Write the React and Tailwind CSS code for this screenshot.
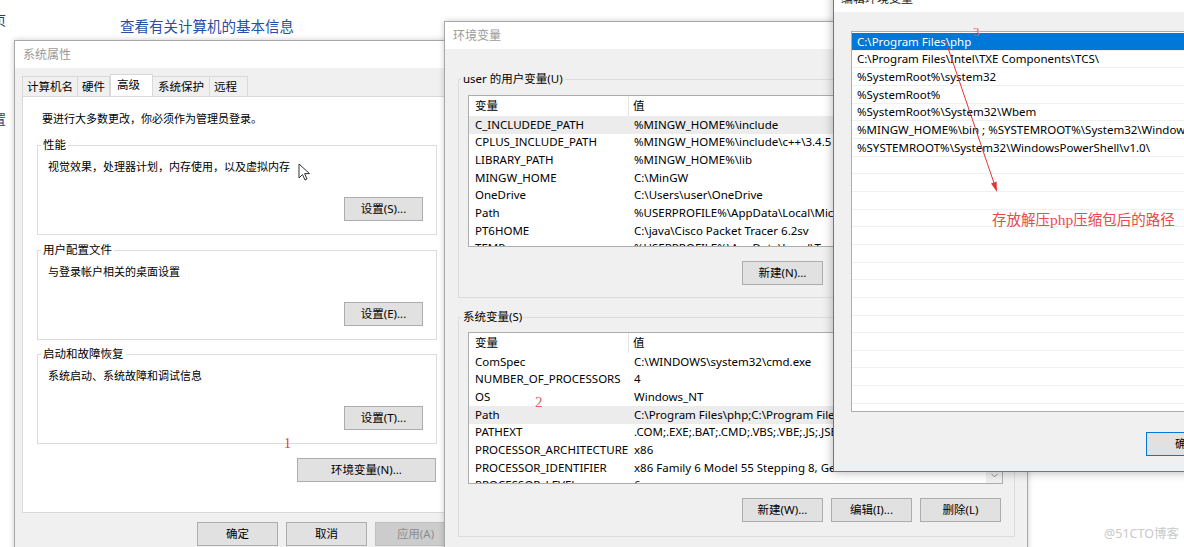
import { ChevronDown } from "lucide-react";

const userVars = [
  ["C_INCLUDEDE_PATH", "%MINGW_HOME%\\include"],
  ["CPLUS_INCLUDE_PATH", "%MINGW_HOME%\\include\\c++\\3.4.5"],
  ["LIBRARY_PATH", "%MINGW_HOME%\\lib"],
  ["MINGW_HOME", "C:\\MinGW"],
  ["OneDrive", "C:\\Users\\user\\OneDrive"],
  ["Path", "%USERPROFILE%\\AppData\\Local\\Microsoft\\WindowsApps;"],
  ["PT6HOME", "C:\\java\\Cisco Packet Tracer 6.2sv"],
  ["TEMP", "%USERPROFILE%\\AppData\\Local\\Temp"],
];

const sysVars = [
  ["ComSpec", "C:\\WINDOWS\\system32\\cmd.exe"],
  ["NUMBER_OF_PROCESSORS", "4"],
  ["OS", "Windows_NT"],
  ["Path", "C:\\Program Files\\php;C:\\Program Files\\Intel\\TXE Components\\TCS\\;"],
  ["PATHEXT", ".COM;.EXE;.BAT;.CMD;.VBS;.VBE;.JS;.JSE;.WSF;.WSH;.MSC"],
  ["PROCESSOR_ARCHITECTURE", "x86"],
  ["PROCESSOR_IDENTIFIER", "x86 Family 6 Model 55 Stepping 8, GenuineIntel"],
  ["PROCESSOR_LEVEL", "6"],
];

const pathItems = [
  "C:\\Program Files\\php",
  "C:\\Program Files\\Intel\\TXE Components\\TCS\\",
  "%SystemRoot%\\system32",
  "%SystemRoot%",
  "%SystemRoot%\\System32\\Wbem",
  "%MINGW_HOME%\\bin ; %SYSTEMROOT%\\System32\\WindowsPowerShell\\v1.0\\",
  "%SYSTEMROOT%\\System32\\WindowsPowerShell\\v1.0\\",
];

function Btn({ w = "w-[81px]", tone = "border-[#adadad] bg-[#e1e1e1] text-black", children }) {
  return (
    <div className={`flex h-[24px] shrink-0 items-center justify-center border text-[11.5px] ${tone} ${w}`}>
      {children}
    </div>
  );
}

function Group({ title, text, button, className = "" }) {
  return (
    <fieldset className={`h-[98px] w-[400px] border border-[#dcdcdc] px-[10px] ${className}`}>
      <legend className="ml-[-7px] px-[2px] text-[11.5px] leading-[16px]">{title}</legend>
      <div className="mt-[6px] text-[11px] leading-[16px]">{text}</div>
      <div className="mt-[22px] flex justify-end pr-[3px]">
        <Btn w="w-[79px]">{button}</Btn>
      </div>
    </fieldset>
  );
}

function ListView({ rows, active }) {
  return (
    <div className="flex h-[152px] w-[535px] overflow-hidden border border-[#adadad] bg-white">
      <div className="min-w-0 flex-1 overflow-hidden">
        <div className="flex h-[20px] items-center text-[11.5px]">
          <div className="flex h-full w-[160px] shrink-0 items-center border-r border-[#e5e5e5] pl-[6px]">变量</div>
          <div className="pl-[4px]">值</div>
        </div>
        {rows.map(([k, v], i) => (
          <div
            key={k}
            className={`flex h-[17.67px] items-center whitespace-nowrap text-[11.5px] leading-[16px] ${i === active ? "bg-[#ececec]" : ""}`}
          >
            <div className="w-[160px] shrink-0 overflow-hidden pl-[6px]">{k}</div>
            <div className="pl-[5px]">{v}</div>
          </div>
        ))}
      </div>
      <div className="flex w-[16px] flex-col items-center justify-end bg-[#f0f0f0] pb-[2px]">
        <ChevronDown size={11} strokeWidth={1.5} className="text-[#606060]" />
      </div>
    </div>
  );
}

function SystemProps() {
  return (
    <div className="absolute left-[14px] top-[40px] h-[520px] w-[452px] border border-[#a8a8a8] bg-[#f0f0f0] shadow-[0_0_6px_rgba(0,0,0,0.2)]">
      <div className="flex h-[27px] items-center bg-white pl-[8px] text-[12px] text-[#9a9a9a]">系统属性</div>
      <div className="px-[7px] pt-[6px]">
        <div className="flex h-[22px] items-end text-[11.5px]">
          <div className="flex h-[20px] items-center border border-b-0 border-[#d9d9d9] px-[4px]">计算机名</div>
          <div className="flex h-[20px] items-center border border-b-0 border-l-0 border-[#d9d9d9] px-[4px]">硬件</div>
          <div className="flex h-[22px] w-[43px] items-start border border-b-0 border-[#d9d9d9] bg-white px-[6px] pt-[1px]">高级</div>
          <div className="flex h-[20px] items-center border border-b-0 border-l-0 border-[#d9d9d9] px-[5px]">系统保护</div>
          <div className="flex h-[20px] w-[38px] items-center border border-b-0 border-l-0 border-[#d9d9d9] px-[4px]">远程</div>
        </div>
        <div className="relative h-[417px] border border-[#d9d9d9] bg-white pl-[14px] pt-[14px]">
          <div className="pl-[5px] text-[11px] leading-[16px]">要进行大多数更改，你必须作为管理员登录。</div>
          <Group className="mt-[10px]" title="性能" text="视觉效果，处理器计划，内存使用，以及虚拟内存" button="设置(S)..." />
          <Group className="mt-[7px]" title="用户配置文件" text="与登录帐户相关的桌面设置" button="设置(E)..." />
          <Group className="mt-[6px]" title="启动和故障恢复" text="系统启动、系统故障和调试信息" button="设置(T)..." />
          <div className="mt-[14px] pl-[260px]">
            <Btn w="w-[139px]">环境变量(N)...</Btn>
          </div>
          <span className="absolute left-[261px] top-[340px] font-['Liberation_Serif',serif] text-[14px] leading-none text-[#e03c3c]">1</span>
          <svg className="absolute left-[275px] top-[66px]" width="14" height="18" viewBox="0 0 14 18">
            <path d="M1 1 L1 15 L4.5 11.5 L7 17 L9 16 L6.6 10.6 L11.5 10.6 Z" fill="white" stroke="#333" strokeWidth="1" strokeLinejoin="round" />
          </svg>
        </div>
        <div className="mt-[9px] flex gap-[8px] pl-[175px]">
          <Btn>确定</Btn>
          <Btn>取消</Btn>
          <Btn tone="border-[#bfbfbf] bg-[#cccccc] text-[#8c8c8c]">应用(A)</Btn>
        </div>
      </div>
    </div>
  );
}

function EnvDialog() {
  return (
    <div className="absolute left-[444px] top-[21px] h-[540px] w-[584px] border border-[#a8a8a8] bg-[#f0f0f0] shadow-[0_0_6px_rgba(0,0,0,0.2)]">
      <div className="flex h-[27px] items-center bg-white pl-[8px] text-[12px] text-[#9a9a9a]">环境变量</div>
      <div className="px-[13px]">
        <fieldset className="mt-[22px] w-[557px] border border-[#dcdcdc] px-[9px] pb-[12px]">
          <legend className="ml-[-7px] px-[2px] text-[11.5px] leading-[16px]">user 的用户变量(U)</legend>
          <div className="mt-[8px]">
            <ListView rows={userVars} active={0} />
          </div>
          <div className="mt-[14px] pl-[274px]">
            <Btn>新建(N)...</Btn>
          </div>
        </fieldset>
        <fieldset className="mt-[11px] w-[557px] border border-[#dcdcdc] px-[9px] pb-[14px]">
          <legend className="ml-[-7px] px-[2px] text-[11.5px] leading-[16px]">系统变量(S)</legend>
          <div className="mt-[7px]">
            <ListView rows={sysVars} active={3} />
          </div>
          <div className="mt-[14px] flex gap-[8px] pl-[274px]">
            <Btn>新建(W)...</Btn>
            <Btn>编辑(I)...</Btn>
            <Btn>删除(L)</Btn>
          </div>
        </fieldset>
      </div>
    </div>
  );
}

function EditDialog() {
  const blank = Array.from({ length: 14 });
  return (
    <div className="absolute left-[833px] top-[-16px] h-[488px] w-[420px] border border-[#2b88d8] bg-[#f0f0f0] shadow-[0_0_10px_rgba(0,0,0,0.3)]">
      <div className="flex h-[27px] items-center bg-white pl-[7px] text-[12px] text-[#222]">编辑环境变量</div>
      <div className="pl-[17px]">
        <div className="mt-[19px] h-[381px] overflow-hidden border border-[#adadad] bg-white pt-[1px]">
          {pathItems.map((p, i) => (
            <div
              key={p}
              className={`flex h-[17.67px] items-center whitespace-nowrap border-b border-[#f0f0f0] pl-[5px] text-[11.5px] ${i === 0 ? "bg-[#0078d7] text-white" : "text-black"}`}
            >
              {p}
            </div>
          ))}
          {blank.map((_, i) => (
            <div key={i} className="h-[17.67px] border-b border-[#f0f0f0]" />
          ))}
        </div>
        <div className="mt-[20px] pl-[295px]">
          <Btn tone="border-[#0078d7] bg-[#e1e1e1] text-black">确定</Btn>
        </div>
      </div>
    </div>
  );
}

export default function App() {
  return (
    <div className="relative h-[547px] w-[1184px] overflow-hidden bg-white font-['Segoe_UI','Noto_Sans','Noto_Sans_CJK_SC',sans-serif] text-black">
      <span className="absolute left-[-7px] top-[11px] text-[13px] text-[#2d3a6e]">页</span>
      <span className="absolute left-[-7px] top-[110px] text-[13px] text-[#2d3a6e]">置</span>
      <div className="absolute left-[120px] top-[16px] text-[14.5px] leading-[20px] text-[#2450a8]">查看有关计算机的基本信息</div>

      <SystemProps />
      <EnvDialog />

      <span className="absolute left-[535px] top-[395px] font-['Liberation_Serif',serif] text-[15px] leading-none text-[#f05a5a]">2</span>

      <EditDialog />

      <span className="absolute left-[973px] top-[25px] font-['Liberation_Serif',serif] text-[13px] leading-none text-[#f05a5a]">3</span>
      <svg className="pointer-events-none absolute left-0 top-0" width="1184" height="547">
        <line x1="946" y1="42" x2="995" y2="186" stroke="#e53535" strokeWidth="1" />
        <polygon points="997,192 991,183.5 996.6,181.5" fill="#e53535" />
      </svg>
      <div className="absolute left-[992px] top-[209px] text-[14.5px] leading-[20px] text-[#ea4a4a]">
        存放解压<span className="font-['Liberation_Serif',serif] text-[15.5px]">php</span>压缩包后的路径
      </div>

      <div className="absolute left-[1104px] top-[525px] text-[12.5px] text-[#c9c9c9]">@51CTO博客</div>
    </div>
  );
}
